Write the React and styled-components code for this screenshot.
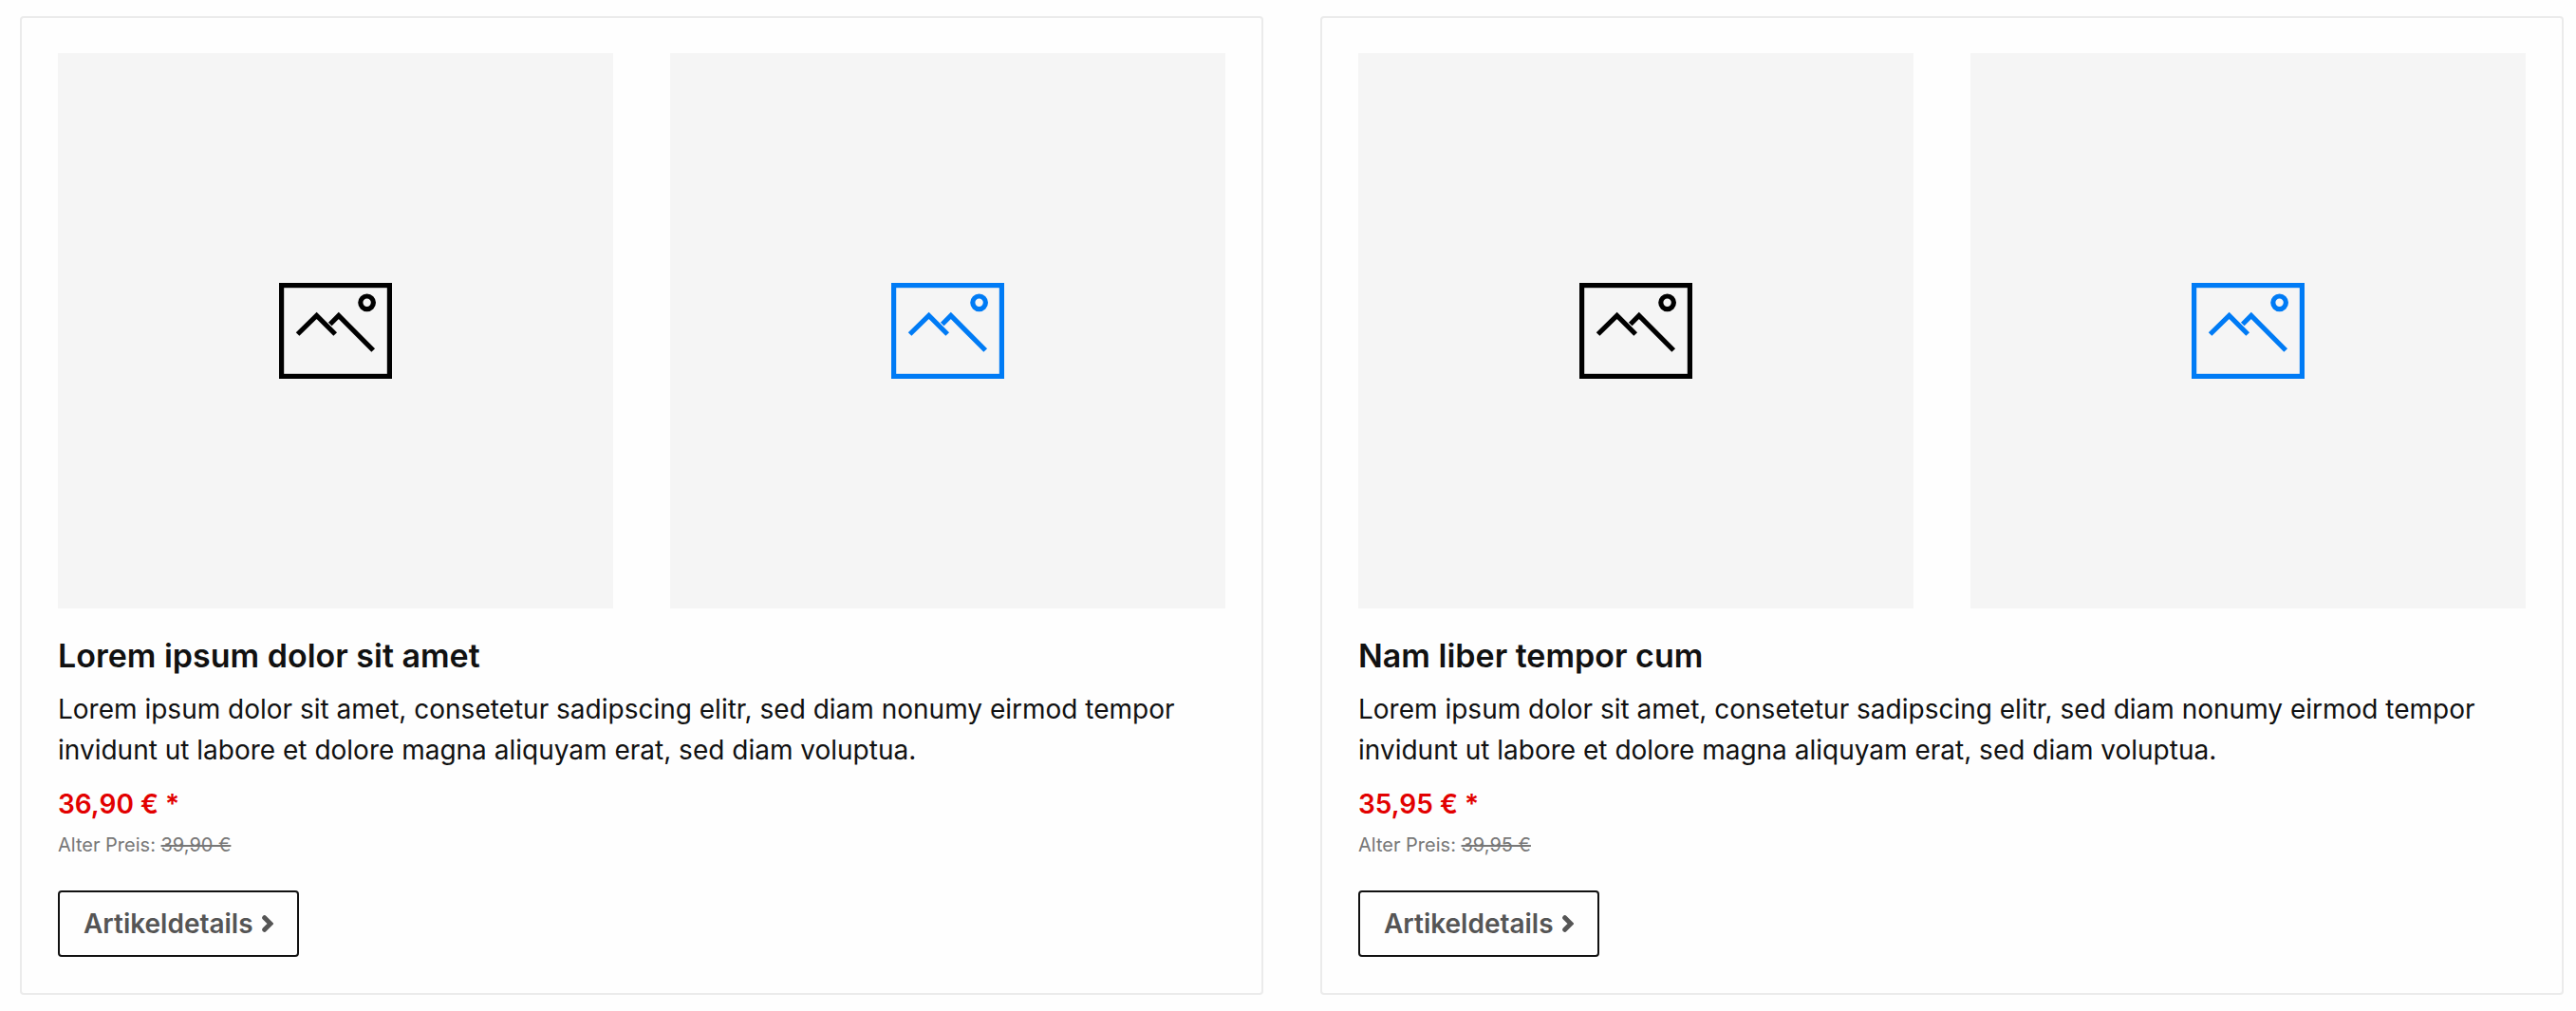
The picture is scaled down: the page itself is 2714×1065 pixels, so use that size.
import styled, { createGlobalStyle } from 'styled-components'

const products = [
    {
        id: 1,
        title: 'Lorem ipsum dolor sit amet',
        price: '36,90 €',
        oldPrice: '39,90 €',
    },
    {
        id: 2,
        title: 'Nam liber tempor cum',
        price: '35,95 €',
        oldPrice: '39,95 €',
    },
];

const description = 'Lorem ipsum dolor sit amet, consetetur sadipscing elitr, sed diam nonumy eirmod tempor invidunt ut labore et dolore magna aliquyam erat, sed diam voluptua.';

const ImageIcon = () => (
    <IconStyle viewBox="0 0 119 101" aria-hidden="true">
        <rect x="2.6" y="2.6" width="113.8" height="95.8" />
        <circle cx="92.6" cy="20.8" r="6.8" />
        <path d="M19.6 54 L39.6 34.5 L59.2 54" />
        <path d="M53.8 43.5 L62.8 34.5 L99.2 71" />
    </IconStyle>
)

const ProductCard = ({ product }) => {
    return (
        <Card>
            <Gallery>
                <Tile $color="#000000">
                    <ImageIcon />
                </Tile>
                <Tile $color="#007bf5">
                    <ImageIcon />
                </Tile>
            </Gallery>
            <Title>{product.title}</Title>
            <Description>{description}</Description>
            <Price>{product.price} *</Price>
            <OldPrice>
                Alter Preis: <s>{product.oldPrice}</s>
            </OldPrice>
            <DetailsLink href="#">
                Artikeldetails
                <Chevron viewBox="0 0 12 18" aria-hidden="true">
                    <path d="M2.7 2.7 L9 9 L2.7 15.3" />
                </Chevron>
            </DetailsLink>
        </Card>
    )
}

const App = () => {
    return (
        <>
            <GlobalStyle />
            <ProductList>
                {products.map((product) => (
                    <ProductCard key={product.id} product={product} />
                ))}
            </ProductList>
        </>
    )
}

export default App

const GlobalStyle = createGlobalStyle`
    * {
        box-sizing: border-box;
    }

    body {
        margin: 0;
        background-color: #fefefe;
        color: #111111;
        font-family: 'Inter', sans-serif;
    }
`

const ProductList = styled.main`
    display: grid;
    grid-template-columns: 1fr 1fr;
    gap: 60px;
    padding: 17px 13px 17px 21px;
`

const Card = styled.article`
    display: flex;
    flex-direction: column;
    align-items: flex-start;
    padding: 37px 38px 38px;
    border: 2px solid #ebebeb;
    border-radius: 4px;
`

const Gallery = styled.div`
    display: grid;
    grid-template-columns: 1fr 1fr;
    gap: 60px;
    width: 100%;
`

const Tile = styled.div`
    display: flex;
    align-items: center;
    justify-content: center;
    aspect-ratio: 1;
    background-color: #f5f5f5;
    color: ${({ $color }) => $color};
`

const IconStyle = styled.svg`
    width: 119px;
    height: 101px;
    fill: none;
    stroke: currentColor;
    stroke-width: 5.2;
`

const Title = styled.h2`
    margin: 30px 0 15px;
    font-size: 34px;
    font-weight: 600;
    line-height: 40px;
`

const Description = styled.p`
    margin: 0 0 14px;
    font-size: 28px;
    line-height: 43px;
`

const Price = styled.strong`
    color: #e20000;
    font-size: 28px;
    font-weight: 600;
    line-height: 43px;
`

const OldPrice = styled.p`
    margin: 5px 0 32px;
    color: #777777;
    font-size: 20px;
    line-height: 32px;
`

const DetailsLink = styled.a`
    display: inline-flex;
    align-items: center;
    gap: 9px;
    height: 70px;
    padding: 0 25px;
    border: 2px solid #111111;
    border-radius: 4px;
    color: #555555;
    font-size: 28px;
    font-weight: 600;
    text-decoration: none;
`

const Chevron = styled.svg`
    width: 12px;
    height: 18px;
    fill: none;
    stroke: currentColor;
    stroke-width: 5;
    stroke-linecap: round;
`
